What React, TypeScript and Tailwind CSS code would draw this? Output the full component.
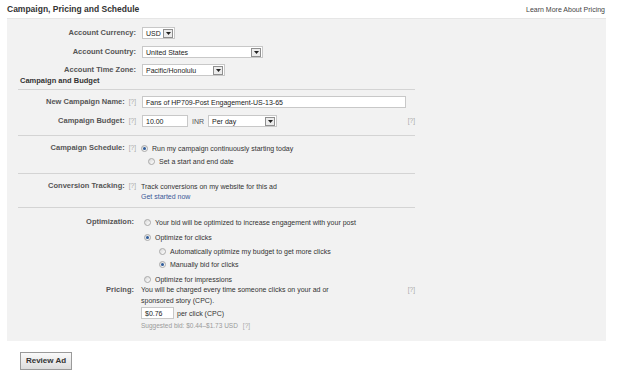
import React from "react";

const Help = ({ className = "" }: { className?: string }) => (
  <span className={`text-[6.5px] text-[#a8a8a8] font-normal ${className}`}>[?]</span>
);

const Arrow = () => (
  <span className="w-[10px] h-[9px] border border-[#8f8f8f] bg-[#ececec] flex items-center justify-center shrink-0">
    <svg width="5" height="3" viewBox="0 0 5 3">
      <path d="M0 0h5L2.5 3z" fill="#222" />
    </svg>
  </span>
);

const Select = ({ value, width }: { value: string; width: string }) => (
  <div className={`${width} h-[12px] bg-white border border-[#c8c8c8] flex items-center justify-between pl-[3px] pr-[1px]`}>
    <span className="text-[7px] text-[#222] leading-none">{value}</span>
    <Arrow />
  </div>
);

const Radio = ({ checked = false }: { checked?: boolean }) => (
  <span className="w-[7px] h-[7px] rounded-full border border-[#a9a9a9] bg-gradient-to-br from-[#d8d8d8] to-white flex items-center justify-center shrink-0">
    {checked && <span className="w-[3px] h-[3px] rounded-full bg-[#2d5b9a]" />}
  </span>
);

const Label = ({ text, help, width = "w-[129px]" }: { text: string; help?: boolean; width?: string }) => (
  <div className={`${width} shrink-0 text-right text-[7.5px] font-bold text-[#555] leading-none`}>
    {text}
    {help && <Help className="ml-[4px]" />}
  </div>
);

const Line = ({ className = "" }: { className?: string }) => (
  <div className={`ml-[11px] w-[397px] h-px bg-[#d4d4d4] ${className}`} />
);

const Choice = ({ text, checked, indent = "ml-[141px]", className = "" }: { text: string; checked?: boolean; indent?: string; className?: string }) => (
  <div className={`${indent} h-[10px] flex items-center gap-[4px] ${className}`}>
    <Radio checked={checked} />
    <span className="text-[7px] text-[#333] leading-none">{text}</span>
  </div>
);

export default function App() {
  return (
    <div className="w-[620px] h-[374px] bg-white overflow-hidden font-['Liberation_Sans',Arial,sans-serif] text-[#333]">
      <div className="h-[18px] px-[7px] pr-[15px] flex items-center justify-between">
        <h2 className="text-[8.5px] font-bold text-[#333] leading-none">Campaign, Pricing and Schedule</h2>
        <span className="text-[7px] text-[#444] leading-none">Learn More About Pricing</span>
      </div>

      <section className="ml-[7px] w-[599px] bg-[#f2f2f2] border-t border-[#e6e6e6] pt-[8px] pb-[10px]">
        <div className="h-[12px] flex items-center">
          <Label text="Account Currency:" />
          <div className="ml-[6px]">
            <Select value="USD" width="w-[33px]" />
          </div>
        </div>
        <div className="mt-[7px] h-[12px] flex items-center">
          <Label text="Account Country:" />
          <div className="ml-[6px]">
            <Select value="United States" width="w-[121px]" />
          </div>
        </div>
        <div className="mt-[6px] h-[12px] flex items-center">
          <Label text="Account Time Zone:" />
          <div className="ml-[6px]">
            <Select value="Pacific/Honolulu" width="w-[83px]" />
          </div>
        </div>
        <div className="h-[9px] ml-[13px] flex items-center text-[7.5px] font-bold text-[#333] leading-none">
          Campaign and Budget
        </div>
        <Line className="mt-[4px]" />

        <div className="mt-[6px] h-[12px] flex items-center">
          <Label text="New Campaign Name:" help />
          <div className="ml-[6px] w-[264px] h-[12px] bg-white border border-[#c8c8c8] flex items-center pl-[3px] text-[7px] text-[#222] leading-none">
            Fans of HP709-Post Engagement-US-13-65
          </div>
        </div>
        <div className="mt-[7px] h-[12px] w-[408px] flex items-center">
          <Label text="Campaign Budget:" help />
          <div className="ml-[6px] w-[46px] h-[12px] bg-white border border-[#c8c8c8] flex items-center pl-[3px] text-[7px] text-[#222] leading-none">
            10.00
          </div>
          <span className="ml-[4px] text-[7px] text-[#555] leading-none">INR</span>
          <div className="ml-[4px]">
            <Select value="Per day" width="w-[69px]" />
          </div>
          <Help className="ml-auto" />
        </div>
        <Line className="mt-[8px]" />

        <div className="mt-[7px] h-[10px] flex items-center">
          <Label text="Campaign Schedule:" help />
          <div className="ml-[5px] flex items-center gap-[4px]">
            <Radio checked />
            <span className="text-[7px] text-[#333] leading-none">Run my campaign continuously starting today</span>
          </div>
        </div>
        <Choice text="Set a start and end date" className="mt-[3px]" />
        <Line className="mt-[7px]" />

        <div className="mt-[7px] h-[10px] flex items-center">
          <Label text="Conversion Tracking:" help />
          <span className="ml-[5px] text-[7px] text-[#333] leading-none">Track conversions on my website for this ad</span>
        </div>
        <div className="ml-[134px] h-[10px] flex items-center text-[7px] text-[#3b5998] leading-none">Get started now</div>
        <Line className="mt-[6px]" />

        <div className="mt-[9px] h-[10px] flex items-center">
          <Label text="Optimization:" width="w-[127px]" />
          <div className="ml-[10px] flex items-center gap-[4px]">
            <Radio />
            <span className="text-[7px] text-[#333] leading-none">Your bid will be optimized to increase engagement with your post</span>
          </div>
        </div>
        <Choice text="Optimize for clicks" checked indent="ml-[137px]" className="mt-[5px]" />
        <Choice text="Automatically optimize my budget to get more clicks" indent="ml-[152px]" className="mt-[4px]" />
        <Choice text="Manually bid for clicks" checked indent="ml-[152px]" className="mt-[3px]" />
        <Choice text="Optimize for impressions" indent="ml-[137px]" className="mt-[5px]" />

        <div className="w-[408px] flex items-start">
          <Label text="Pricing:" width="w-[127px] pt-[2px]" />
          <p className="ml-[7px] w-[200px] text-[7px] text-[#333] leading-[11px]">
            You will be charged every time someone clicks on your ad or sponsored story (CPC).
          </p>
          <Help className="ml-auto pt-[1px]" />
        </div>
        <div className="mt-[1px] ml-[134px] h-[12px] flex items-center">
          <div className="w-[33px] h-[12px] bg-white border border-[#c8c8c8] flex items-center pl-[3px] text-[7px] text-[#222] leading-none">
            $0.76
          </div>
          <span className="ml-[3px] text-[7px] text-[#333] leading-none">per click (CPC)</span>
        </div>
        <div className="mt-[2px] ml-[134px] h-[10px] flex items-center text-[6.5px] text-[#9a9a9a] leading-none">
          Suggested bid: $0.44–$1.73 USD
          <Help className="ml-[5px]" />
        </div>
      </section>

      <button className="mt-[11px] ml-[20px] w-[52px] h-[18px] border border-[#9a9a9a] bg-gradient-to-b from-[#fafafa] to-[#dcdcdc] text-[8px] font-bold text-[#333] leading-none">
        Review Ad
      </button>
    </div>
  );
}
